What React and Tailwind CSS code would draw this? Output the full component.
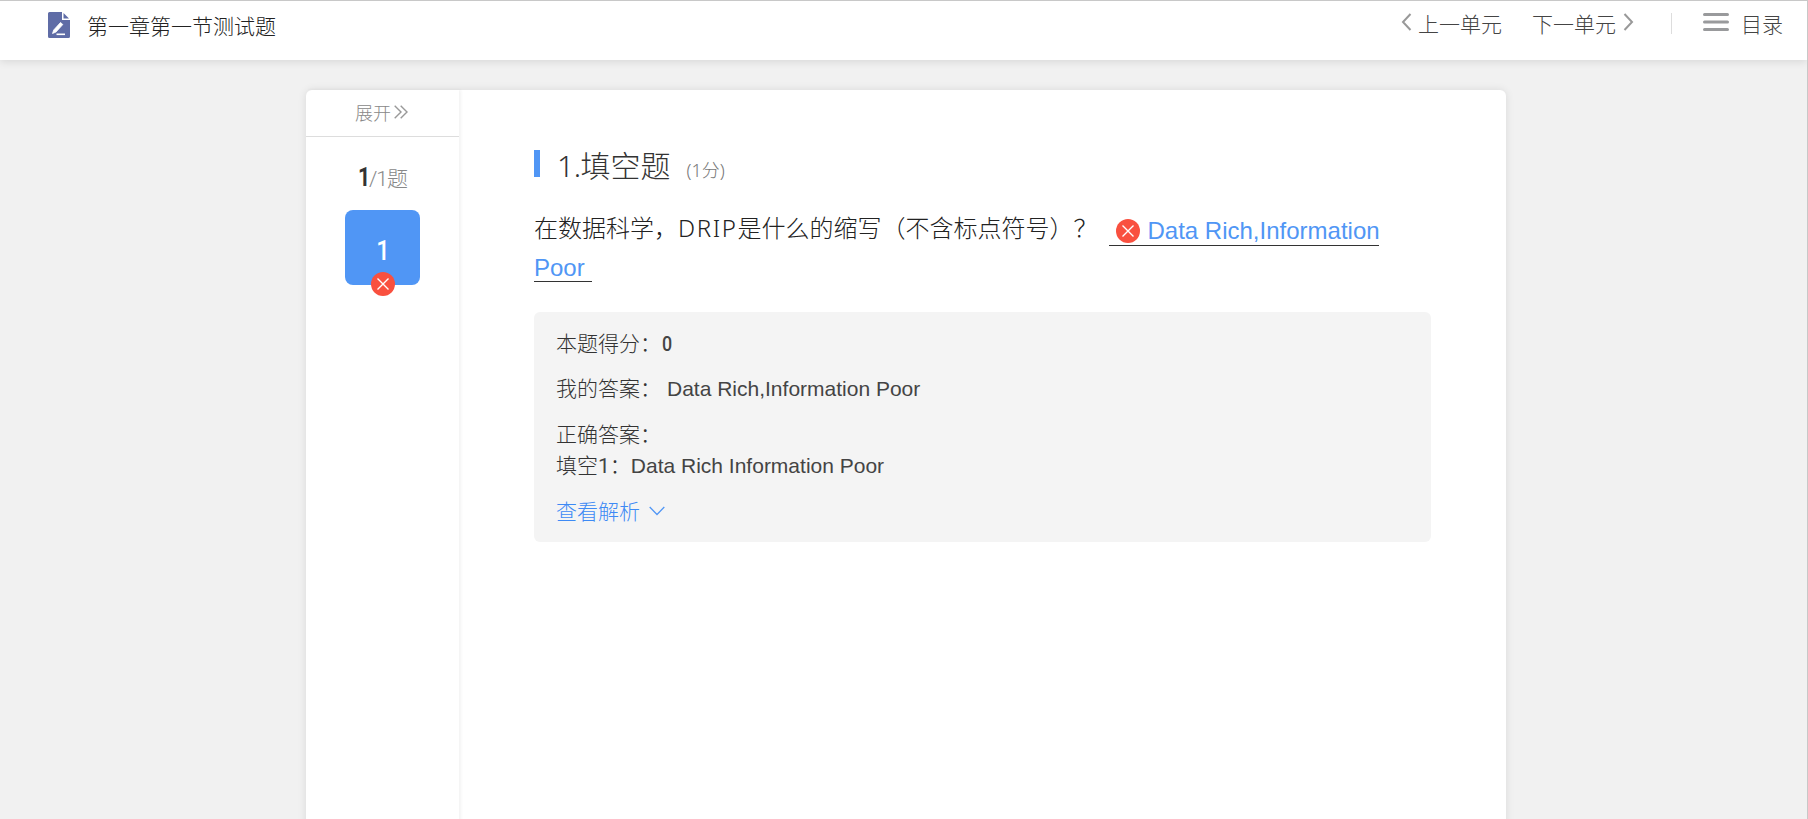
import React from 'react';

const WrongBadge = ({ className }) => (
  <svg className={className} width="24" height="24" viewBox="0 0 24 24" fill="none">
    <circle cx="12" cy="12" r="12" fill="#f9503f" />
    <path d="M6.5 6.5l11 11M17.5 6.5l-11 11" stroke="#fff" strokeWidth="1.4" />
  </svg>
);

const Header = () => (
  <header className="relative flex h-[60px] items-start justify-between border-t border-[#c8c8c8] bg-white pl-12 pr-6 shadow-[0_2px_8px_rgba(0,0,0,0.1)]">
    <div className="flex items-start">
      <svg className="mt-[11px]" width="22" height="26" viewBox="0 0 22 26">
        <path d="M1.5 0H14v8h8v16.5a1.5 1.5 0 0 1-1.5 1.5h-19A1.5 1.5 0 0 1 0 24.5V1.5A1.5 1.5 0 0 1 1.5 0z" fill="#5f6ca6" />
        <path d="M15.5 1l5.5 5.5h-5.5z" fill="#5f6ca6" />
        <path d="M4.5 21.5l1.2-3.5 6.8-7.5 2.3 2-6.8 7.5z" fill="#fff" stroke="#fff" strokeWidth="0.8" />
        <path d="M8.5 22.3H17" stroke="#fff" strokeWidth="1.6" />
      </svg>
      <h1 className="ml-[17px] mt-2 text-[21px] font-light leading-[32px] text-[#222]">第一章第一节测试题</h1>
    </div>
    <nav className="flex items-start text-[21px] font-light leading-[32px] text-[#444]">
      <svg className="mt-3 mr-[6px]" width="11" height="18" viewBox="0 0 11 18" fill="none">
        <path d="M9.5 1L2 9l7.5 8" stroke="#999" strokeWidth="2" />
      </svg>
      <span className="mt-[6px]">上一单元</span>
      <span className="ml-[30px] mt-[6px]">下一单元</span>
      <svg className="ml-[7px] mt-3" width="11" height="18" viewBox="0 0 11 18" fill="none">
        <path d="M1.5 1L9 9l-7.5 8" stroke="#999" strokeWidth="2" />
      </svg>
      <span className="ml-[37px] mt-3 h-[21px] w-px bg-[#ddd]" />
      <svg className="ml-[31px] mt-3" width="26" height="18" viewBox="0 0 26 18">
        <path d="M1.5 1.5h23M1.5 9h23M1.5 16.5h23" stroke="#999a9c" strokeWidth="3" strokeLinecap="round" />
      </svg>
      <span className="ml-3 mt-[6px]">目录</span>
    </nav>
  </header>
);

const Sidebar = () => (
  <aside className="flex w-[153px] shrink-0 flex-col items-center shadow-[2px_0_3px_rgba(0,0,0,0.05)]">
    <div className="flex h-[47px] w-full items-center justify-center border-b border-[#ddd] pb-[2px] pr-[2px] text-lg font-light text-[#888]">
      <span>展开</span>
      <svg className="ml-[3px]" width="14" height="14" viewBox="0 0 14 14" fill="none">
        <path d="M.7.7L7 7 .7 13.3M6.7.7L13 7l-6.3 6.3" stroke="#999" strokeWidth="1.4" />
      </svg>
    </div>
    <div className="mt-[24px] flex h-8 items-baseline text-[21px] font-light leading-[32px] text-[#888]">
      <span className="inline-block w-[12px] scale-x-85 font-['Roboto'] text-[25px] font-bold text-[#333]">1</span>
      <span className="inline-block w-[18px] font-['Roboto'] tracking-[-1px]">/1</span>
      <span>题</span>
    </div>
    <div className="relative mt-[17px] flex h-[75px] w-[75px] items-center justify-center rounded-lg bg-[#5096f5] pt-[7px] font-['Roboto'] text-[28px] font-medium text-white">
      <span className="scale-x-85">1</span>
      <WrongBadge className="absolute -bottom-[11px] left-[26px]" />
    </div>
  </aside>
);

const Result = () => (
  <div className="mt-[30px] h-[230px] w-[897px] rounded-md bg-[#f4f4f4] pl-[22px] pt-[15px] text-[21px] font-light leading-[31px] text-[#333]">
    <p>本题得分：<span className="inline-block scale-x-85 font-['Roboto'] font-medium leading-none text-[#444]">0</span></p>
    <p className="mt-[14px]">
      我的答案：
      <span className="ml-[6px] font-['Liberation_Sans'] font-normal text-[#444]">Data Rich,Information Poor</span>
    </p>
    <p className="mt-[14px]">正确答案：</p>
    <p>
      填空<span className="font-['Roboto'] font-normal text-[#444]">1</span>：
      <span className="font-['Liberation_Sans'] font-normal text-[#444]">Data Rich Information Poor</span>
    </p>
    <div className="mt-[13px] flex items-center text-[#3d8af5]">
      <span>查看解析</span>
      <svg className="ml-[9px]" width="16" height="10" viewBox="0 0 16 10" fill="none">
        <path d="M.7 1L8 8.5 15.3 1" stroke="#5096f5" strokeWidth="1.3" />
      </svg>
    </div>
  </div>
);

const Question = () => (
  <main className="flex-1 pl-[75px] pt-[57px]">
    <div className="flex h-11 items-start">
      <span className="mt-[3px] h-[27px] w-[6px] bg-[#5096f5]" />
      <div className="-mt-[3px] ml-[17px] flex items-baseline">
        <h2 className="text-[30px] font-light leading-[40px] text-[#333]">
          <span className="font-['Noto_Sans'] tracking-[-0.5px]">1.</span>填空题
        </h2>
        <span className="ml-4 text-lg font-light text-[#777]">
          <span className="font-['Noto_Sans']">(1</span>分<span className="font-['Noto_Sans']">)</span>
        </span>
      </div>
    </div>
    <div className="mt-[20px] text-2xl leading-[36px] text-[#222]">
      <div className="flex h-9">
        <p className="-mt-[2px] font-light">
          在数据科学，<span className="font-['Noto_Sans'] tracking-[1.6px]">DRIP</span>是什么的缩写（不含标点符号）？
        </p>
        <p className="ml-[12px] flex h-[35px] w-[270px] items-center border-b border-[#333] pl-[7px] pt-[5px] font-['Liberation_Sans'] text-[#5096f5]">
          <WrongBadge className="mr-[7px] shrink-0" />
          <span className="whitespace-nowrap pt-px">Data Rich,Information</span>
        </p>
      </div>
      <p className="h-[35px] w-[58px] border-b border-[#333] pt-[3px] font-['Liberation_Sans'] text-[#5096f5]">Poor</p>
    </div>
    <Result />
  </main>
);

const App = () => (
  <div className="h-[819px] overflow-hidden border-r border-[#c8c8c8] bg-[#f1f1f1] font-['Noto_Sans_CJK_SC',sans-serif]">
    <Header />
    <div className="ml-[306px] mt-[30px] flex h-[760px] w-[1200px] rounded-md bg-white shadow-[0_0_8px_rgba(0,0,0,0.1)]">
      <Sidebar />
      <Question />
    </div>
  </div>
);

export default App;
